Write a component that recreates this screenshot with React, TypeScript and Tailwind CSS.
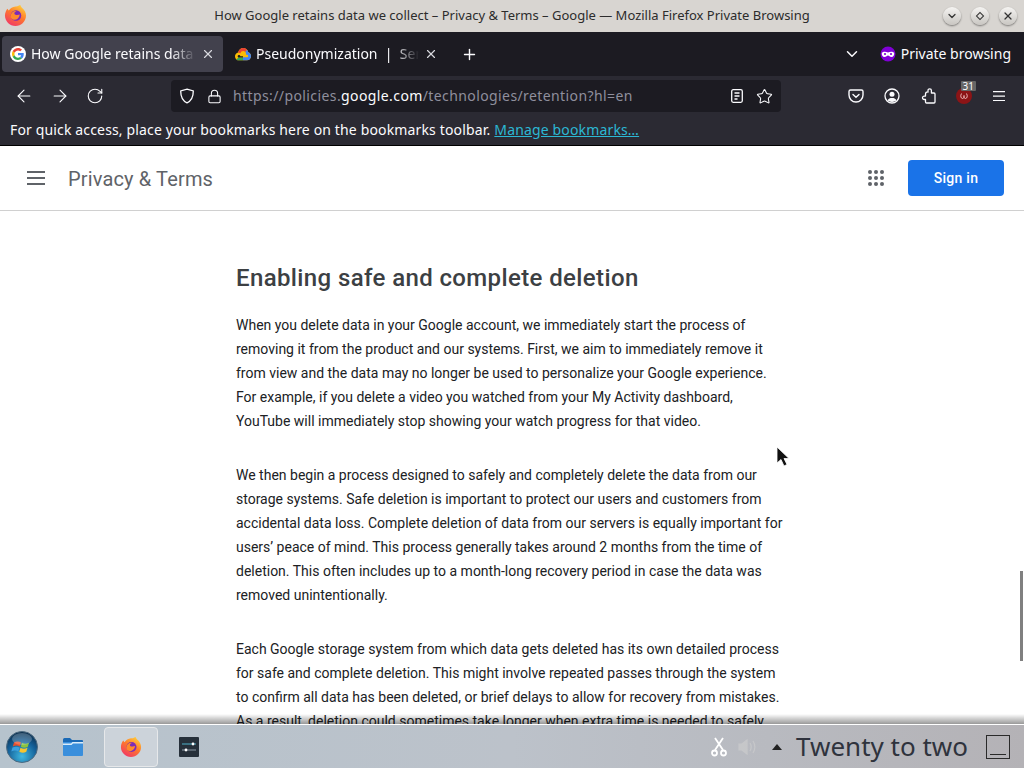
import { ArrowLeft, ArrowRight, RotateCw, Lock, Star, ChevronDown, X, Plus } from 'lucide-react';

function FirefoxLogo({ size }: { size: number }) {
  return (
    <svg width={size} height={size} viewBox="0 0 24 24">
      <defs>
        <linearGradient id="ffa" x1="0.8" y1="0" x2="0.2" y2="1">
          <stop offset="0" stopColor="#ffd23c" />
          <stop offset="0.45" stopColor="#ff7a2b" />
          <stop offset="1" stopColor="#f0336b" />
        </linearGradient>
      </defs>
      <path d="M12 2.500c2 .3 4-1.200 5-1.500.4 1 .8 2 1.700 2.800C21.400 6 23 8.800 23 12c0 6-5 11-11 11S1 18 1 12c0-1.500.3-3 .9-4.300C2.500 6.400 3 5.500 3.600 5 4 6 4.500 6.500 5 6.800 6.500 4.300 9 2.800 12 2.500z" fill="url(#ffa)" />
      <circle cx="12.500" cy="12" r="5.500" fill="#7b2bb8" />
      <path d="M7 12c.5-3 3-5 6-4.500-2 .5-2.500 2-2 3 1 1.500 4 1 5.500.5-.500 3.500-3 5.500-5.500 5.500-2.500 0-4.500-2-4-4.500z" fill="#ff8a2b" />
    </svg>
  );
}

function GoogleG() {
  return (
    <svg width="16" height="16" viewBox="0 0 48 48" className="shrink-0">
      <circle cx="24" cy="24" r="24" fill="#fff" />
      <g transform="translate(6 6) scale(.75)">
        <path fill="#EA4335" d="M24 9.500c3.500 0 6.700 1.200 9.200 3.600l6.900-6.900C35.900 2.400 30.500 0 24 0 14.600 0 6.500 5.400 2.600 13.200l8 6.200C12.500 13.700 17.800 9.500 24 9.500z" />
        <path fill="#4285F4" d="M47 24.500c0-1.600-.1-3.100-.4-4.500H24v9h12.900c-.6 3-2.200 5.500-4.700 7.200l7.700 6c4.500-4.200 7.100-10.300 7.100-17.700z" />
        <path fill="#FBBC05" d="M10.600 28.600c-.5-1.400-.8-3-.8-4.600s.3-3.200.8-4.600l-8-6.200C.9 16.500 0 20.100 0 24s.9 7.500 2.600 10.800l8-6.200z" />
        <path fill="#34A853" d="M24 48c6.500 0 11.900-2.100 15.900-5.800l-7.700-6c-2.200 1.400-4.900 2.300-8.200 2.300-6.200 0-11.500-4.200-13.400-9.900l-8 6.200C6.500 42.600 14.600 48 24 48z" />
      </g>
    </svg>
  );
}

function CloudLogo() {
  return (
    <svg width="16" height="16" viewBox="0 0 24 24" className="shrink-0">
      <path d="M6 21.500C2.700 21.500 0 18.900 0 15.600c0-2.800 1.900-5.200 4.600-5.800C5.700 6 8.600 3 12.300 3c3.800 0 7 2.800 7.600 6.500 2.400.8 4.100 3.100 4.100 5.800 0 3.400-2.700 6.200-6 6.200z" fill="#fbbc05" />
      <path d="M4.600 9.800C5.700 6 8.600 3 12.300 3c2.300 0 4.400 1 5.800 2.700L15.500 9c-.8-.9-2-1.500-3.200-1.500-2 0-3.600 1.400-4 3.300z" fill="#ea4335" />
      <path d="M18.100 5.700c.9 1.100 1.500 2.400 1.800 3.800 2.400.8 4.100 3.100 4.100 5.800 0 3.400-2.700 6.200-6 6.200h-6V17h6c1 0 1.800-.8 1.800-1.800 0-1.200-1-2-2.200-2h-1.100v-1.500c0-1-.4-2-1-2.700z" fill="#4285f4" />
      <path d="M6 21.500c-1.500 0-2.800-.5-3.900-1.400l2.900-2.900c.3.100.6.200 1 .2h6v4.100z" fill="#34a853" />
      <path d="M6 17.400c-1.200 0-2-.9-2-2s.9-2 2-2 2 .9 2 2h4v2z" fill="#1c1b22" />
    </svg>
  );
}

function Shield() {
  return (
    <svg width="16" height="16" viewBox="0 0 16 16" fill="none" stroke="#fbfbfe" strokeWidth="1.300">
      <path d="M8 1.200 14.300 3c0 6-1.700 9.800-6.300 11.800C3.400 12.800 1.700 9 1.700 3z" />
    </svg>
  );
}

function Reader() {
  return (
    <svg width="16" height="16" viewBox="0 0 16 16" fill="none" stroke="#fbfbfe" strokeWidth="1.300">
      <rect x="2.700" y="1.700" width="10.600" height="12.600" rx="1.500" />
      <path d="M5.500 5h5M5.500 8h5M5.500 11h3" />
    </svg>
  );
}

function Pocket() {
  return (
    <svg width="16" height="16" viewBox="0 0 16 16" fill="none" stroke="#fbfbfe" strokeWidth="1.400">
      <path d="M2.500 2h11A1.500 1.500 0 0 1 15 3.500V7a7 7 0 0 1-14 0V3.500A1.500 1.500 0 0 1 2.500 2z" />
      <path d="M5 6.500 8 9.300l3-2.800" strokeLinecap="round" />
    </svg>
  );
}

function Account() {
  return (
    <svg width="16" height="16" viewBox="0 0 16 16" fill="none">
      <circle cx="8" cy="8" r="7" stroke="#fbfbfe" strokeWidth="1.300" />
      <circle cx="8" cy="6.300" r="2.500" fill="#fbfbfe" />
      <path d="M3.500 12.300C4.500 10.500 6 10 8 10s3.500.5 4.500 2.300C11.300 13.500 9.800 14 8 14s-3.300-.5-4.500-1.700z" fill="#fbfbfe" />
    </svg>
  );
}

function Puzzle() {
  return (
    <svg width="16" height="16" viewBox="0 0 16 16" fill="none" stroke="#fbfbfe" strokeWidth="1.300" strokeLinejoin="round">
      <path d="M7 4V2.500a1.700 1.700 0 0 1 3.400 0V5H13a1 1 0 0 1 1 1v8a1 1 0 0 1-1 1H5.500a1 1 0 0 1-1-1v-2.500H3.200a1.700 1.700 0 0 1 0-3.400h1.300V6a2 2 0 0 1 2.500-2z" />
    </svg>
  );
}

function PrivateMask() {
  return (
    <svg width="16" height="16" viewBox="0 0 16 16" className="shrink-0">
      <circle cx="8" cy="8" r="7.500" fill="#8000d7" />
      <path d="M1.800 6.800C3 5.300 6 5.300 8 6.500c2-1.200 5-1.200 6.200.3.300 2.700-.9 4.200-2.700 4.200C9.800 11 9 9.500 8 9.500S6.200 11 4.500 11C2.700 11 1.500 9.500 1.800 6.800z" fill="#fff" />
      <circle cx="5" cy="8" r="1.100" fill="#8000d7" />
      <circle cx="11" cy="8" r="1.100" fill="#8000d7" />
    </svg>
  );
}

function Burger({ width, gap, color, stroke }: { width: number; gap: number; color: string; stroke: number }) {
  const h = gap * 2 + stroke;
  const m = stroke / 2;
  return (
    <svg width={width} height={h} viewBox={`0 0 ${width} ${h}`} stroke={color} strokeWidth={stroke}>
      <path d={`M0 ${m}H${width}M0 ${m + gap}H${width}M0 ${m + gap * 2}H${width}`} />
    </svg>
  );
}

function WindowButton({ children }: { children: React.ReactNode }) {
  return (
    <div className="w-[18px] h-[18px] rounded-full bg-gradient-to-b from-[#f5f4f2] to-[#c9c6c2] shadow-[0_1px_2px_rgba(0,0,0,0.45)] flex items-center justify-center">
      {children}
    </div>
  );
}

function StartOrb() {
  return (
    <svg width="32" height="32" viewBox="0 0 32 32">
      <defs>
        <radialGradient id="orb" cx="0.5" cy="0.8" r="0.8">
          <stop offset="0" stopColor="#3fb7e0" />
          <stop offset="0.6" stopColor="#135f98" />
          <stop offset="1" stopColor="#0d2c49" />
        </radialGradient>
      </defs>
      <circle cx="16" cy="16" r="15.500" fill="url(#orb)" stroke="#4d6a80" />
      <path d="M8 11.500c2.500-1.500 5-1.300 7 0l-1.200 4c-2-1.200-4.300-1.300-7 0z" fill="#e8502c" />
      <path d="M16 11.800c2.200 1.400 4.500 1.400 7 0l-1.200 4c-2.300 1.300-4.700 1.300-7 0z" fill="#8cc43e" />
      <path d="M6.500 16.500c2.500-1.200 4.800-1.100 7 0l-1.200 4c-2-1.200-4.500-1.300-7 0z" fill="#3aa0e0" />
      <path d="M14.500 16.800c2.200 1.300 4.600 1.300 7 0l-1.200 4c-2.300 1.300-4.700 1.300-7 0z" fill="#f7c52e" />
      <ellipse cx="16" cy="8" rx="10" ry="6" fill="#fff" opacity="0.22" />
    </svg>
  );
}

function Folder() {
  return (
    <svg width="22" height="20" viewBox="0 0 22 20">
      <path d="M1 2.500A1.500 1.500 0 0 1 2.500 1H8l2 2h10a1 1 0 0 1 1 1v2H1z" fill="#1a69b5" />
      <path d="M1 5h20v13a1 1 0 0 1-1 1H2a1 1 0 0 1-1-1z" fill="#3a8fdc" />
      <path d="M1 6.500 9 6.500 10.500 5H21v1.500H11L9.500 8H1z" fill="#d9ecfa" />
    </svg>
  );
}

function MixerApp() {
  return (
    <svg width="20" height="20" viewBox="0 0 20 20">
      <rect width="20" height="20" rx="1" fill="#26303a" />
      <path d="M3 7h14" stroke="#4fb0c8" strokeWidth="1" />
      <circle cx="14" cy="7" r="1.400" fill="#fff" />
      <path d="M3 13h14" stroke="#8a98a4" strokeWidth="1" />
      <circle cx="7" cy="13" r="1.400" fill="#fff" />
    </svg>
  );
}

export default function App() {
  const bars = 'font-["Noto_Sans",sans-serif]';
  return (
    <div className={`h-screen w-full overflow-hidden flex flex-col bg-white ${bars}`}>
      {/* title bar */}
      <div className="h-8 shrink-0 bg-[#d8d5d1] relative flex items-center justify-center text-[13px] text-[#2c2c2c]">
        <div className="absolute left-[4px] top-[4px]"><FirefoxLogo size={23} /></div>
        <span>How Google retains data we collect – Privacy &amp; Terms – Google — Mozilla Firefox Private Browsing</span>
        <div className="absolute right-[7px] top-[7px] flex gap-[10px]">
          <WindowButton><ChevronDown size={12} strokeWidth={2.500} color="#333" /></WindowButton>
          <WindowButton><div className="w-[6px] h-[6px] rotate-45 border border-[#333]" /></WindowButton>
          <WindowButton><X size={12} strokeWidth={2.500} color="#333" /></WindowButton>
        </div>
      </div>

      {/* tab strip */}
      <div className="h-11 shrink-0 bg-[#1c1b22] flex items-center pl-[2px] text-[14px] text-[#fbfbfe]">
        <div className="w-[221px] h-9 rounded bg-[#42414d] flex items-center pl-[8px] pr-[8px] gap-[5px]">
          <GoogleG />
          <span className="flex-1 overflow-hidden whitespace-nowrap leading-[19px] -mt-[1px] [mask-image:linear-gradient(to_right,black_85%,transparent)]">How Google retains data</span>
          <X size={14} color="#d8d8de" />
        </div>
        <div className="w-[225px] h-9 flex items-center pl-[12px] pr-[10px] gap-[5px]">
          <CloudLogo />
          <span className="flex-1 min-w-0 whitespace-nowrap leading-[19px] -mt-[1px] [mask-image:linear-gradient(to_right,black_85%,transparent)]">Pseudonymization &nbsp;|&nbsp; Sen</span>
          <X size={14} color="#d8d8de" />
        </div>
        <Plus size={17} className="ml-[13px]" />
        <div className="flex-1" />
        <ChevronDown size={18} />
        <div className="ml-[19px] mr-[13px] flex items-center gap-[5px]">
          <PrivateMask />
          <span className="leading-[19px] -mt-[1px]">Private browsing</span>
        </div>
      </div>

      {/* nav bar */}
      <div className="h-10 shrink-0 bg-[#2b2a33] flex items-center text-[#fbfbfe]">
        <div className="w-[171px] shrink-0 flex items-center pl-[14px] gap-[16px]">
          <ArrowLeft size={20} strokeWidth={1.300} />
          <ArrowRight size={20} strokeWidth={1.300} />
          <RotateCw size={18} strokeWidth={1.500} />
        </div>
        <div className="w-[610px] h-8 rounded bg-[#1c1b22] flex items-center pl-[8px] pr-[8px] text-[14px]">
          <Shield />
          <Lock size={15} strokeWidth={1.700} className="ml-[12px]" />
          <span className="ml-[11px] text-[#8f8f9d] tracking-[0.4px] -mt-[1px]">https://policies.<span className="text-[#fbfbfe]">google.com</span>/technologies/retention?hl=en</span>
          <div className="flex-1" />
          <Reader />
          <Star size={17} strokeWidth={1.500} className="ml-[11px]" />
        </div>
        <div className="flex-1 flex items-center justify-end pr-[19px]">
          <Pocket />
          <div className="ml-[20px]"><Account /></div>
          <div className="ml-[21px]"><Puzzle /></div>
          <div className="ml-[19px] relative w-4 h-4 rounded-full bg-[#8c1416] flex items-center justify-center">
            <svg width="8" height="6" viewBox="0 0 8 6" fill="none" stroke="#f4c4c4" strokeWidth="0.900"><path d="M1.500 0.500C0 3 1 5.500 2.500 5.500S4 4 4 2.500C4 4 4 5.500 5.500 5.500S8 3 6.500 0.500" /></svg>
            <span className="absolute -top-[7px] -right-[4px] bg-[#666] text-[10px] leading-[10px] px-[2px] rounded-[1px]">31</span>
          </div>
          <div className="ml-[21px] flex"><Burger width={12} gap={4.500} color="#fbfbfe" stroke={1.200} /></div>
        </div>
      </div>

      {/* bookmarks notice */}
      <div className="h-[29px] shrink-0 bg-[#2b2a33] flex items-center pl-[10px] text-[14px] text-[#fbfbfe] tracking-[0.15px]">
        <span className="-mt-[2px]">For quick access, place your bookmarks here on the bookmarks toolbar.</span>
        <span className="ml-[4px] -mt-[2px] text-[#2cb8d4] underline">Manage bookmarks…</span>
      </div>
      <div className="h-px shrink-0 bg-black" />

      {/* page */}
      <div className="relative flex-1 min-h-0 overflow-hidden bg-white">
        <header className="h-[65px] border-b border-[#d0d0d0] flex items-center pl-[27px] pr-5">
          <Burger width={18} gap={6} color="#5f6368" stroke={2} />
          <span className="ml-[23px] mt-[1px] text-[20px] tracking-[0.15px] text-[#5f6368] font-['Roboto',sans-serif]">Privacy &amp; Terms</span>
          <div className="flex-1" />
          <div className="grid grid-cols-3 gap-[2px] mr-[24px]">
            {[0, 1, 2, 3, 4, 5, 6, 7, 8].map((i) => (
              <span key={i} className="w-1 h-1 rounded-full bg-[#5f6368]" />
            ))}
          </div>
          <button className="w-[96px] h-9 rounded bg-[#1a73e8] text-white text-[14px] tracking-[0.25px] font-medium font-['Roboto',sans-serif]">Sign in</button>
        </header>
        <main className="pl-[236px] w-[784px] pt-[51px] font-['Roboto',sans-serif] text-[14px] leading-6 text-[#202124]">
          <h2 className="text-[24px] leading-8 font-medium tracking-[0.38px] text-[#3c4043] font-['Roboto',sans-serif]">Enabling safe and complete deletion</h2>
          <p className="mt-[19px]">
            When you delete data in your Google account, we immediately start the process of removing it from the product and our systems. First, we aim to immediately remove it from view and the data may no longer be used to personalize your Google experience. For example, if you delete a video you watched from your My Activity dashboard, YouTube will immediately stop showing your watch progress for that video.
          </p>
          <p className="mt-[30px]">
            We then begin a process designed to safely and completely delete the data from our storage systems. Safe deletion is important to protect our users and customers from accidental data loss. Complete deletion of data from our servers is equally important for users’ peace of mind. This process generally takes around 2 months from the time of deletion. This often includes up to a month-long recovery period in case the data was removed unintentionally.
          </p>
          <p className="mt-[30px]">
            Each Google storage system from which data gets deleted has its own detailed process for safe and complete deletion. This might involve repeated passes through the system to confirm all data has been deleted, or brief delays to allow for recovery from mistakes. As a result, deletion could sometimes take longer when extra time is needed to safely
          </p>
        </main>
        <div className="absolute right-[1px] top-[425px] w-[3px] h-[90px] bg-[#808080]" />
        <svg className="absolute left-[776px] top-[300px]" width="14" height="22" viewBox="0 0 14 22">
          <path d="M1 1v16l4-3.500 3 6.500 3-1.500-3-6h5z" fill="#111" stroke="#fff" strokeWidth="0.800" />
        </svg>
        <div className="absolute left-0 right-0 bottom-0 h-[10px] bg-gradient-to-b from-transparent to-[#00000066]" />
      </div>

      {/* taskbar */}
      <div className="relative h-11 shrink-0 border-t border-white bg-gradient-to-r from-[#b6c3cd] via-[#bcc2ca] to-[#b4b2b6] flex items-center">
        <div className="ml-[6px]"><StartOrb /></div>
        <div className="ml-[24px]"><Folder /></div>
        <div className="ml-[20px] w-[54px] h-10 rounded-sm border border-[#e6e8ea] bg-[#ccd3da] flex items-center justify-center"><FirefoxLogo size={22} /></div>
        <div className="ml-[21px]"><MixerApp /></div>
        <div className="flex-1" />
        <svg width="16" height="20" viewBox="0 0 16 20" fill="none" stroke="#fff" strokeWidth="1.800">
          <path d="M4 1l8 12M12 1 4 13" />
          <circle cx="3.500" cy="16" r="2.500" />
          <circle cx="12.500" cy="16" r="2.500" />
        </svg>
        <svg className="ml-[11px] opacity-60" width="20" height="20" viewBox="0 0 20 20" fill="none" stroke="#d0d0d0" strokeWidth="1.200">
          <path d="M1 7h3l5-4v14l-5-4H1z" fill="#cfcfcf" />
          <path d="M12 6c1.500 2.500 1.500 5.500 0 8M15 4c2.300 3.700 2.300 8.300 0 12" />
        </svg>
        <div className="ml-[14px] w-0 h-0 border-x-[5px] border-x-transparent border-b-[6px] border-b-[#222]" />
        <span className="ml-[14px] text-[26px] text-[#2f333d]">Twenty to two</span>
        <div className="ml-[18px] mr-[14px] w-6 h-6 border border-[#2a2a2a] flex items-end justify-center pb-[3px]">
          <div className="w-4 h-px bg-[#2a2a2a]" />
        </div>
      </div>
    </div>
  );
}
